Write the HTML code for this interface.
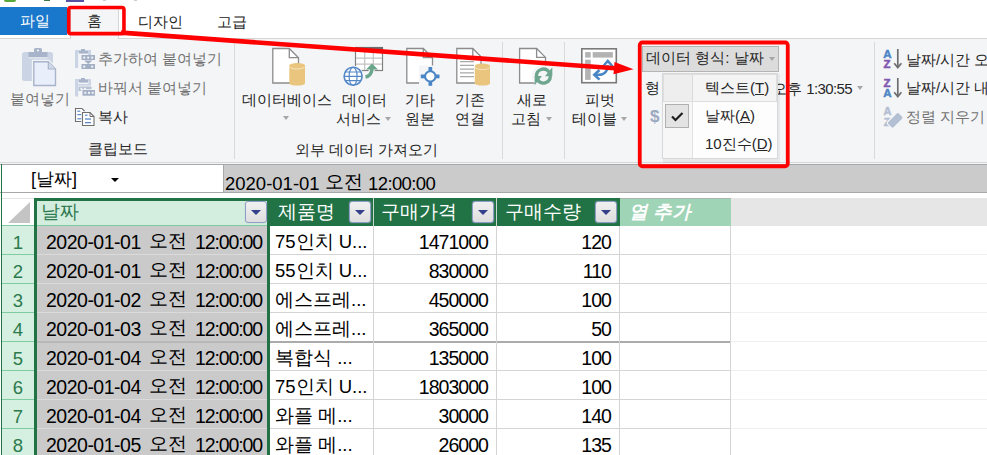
<!DOCTYPE html>
<html><head><meta charset="utf-8">
<style>
*{margin:0;padding:0;box-sizing:border-box}
html,body{width:987px;height:455px;overflow:hidden;background:#fff}
body{position:relative;font-family:"Liberation Sans",sans-serif;color:#262626}
.a{position:absolute}
.t{position:absolute;white-space:pre;line-height:1;font-size:15px}
.g{color:#727272}
.dk{color:#262626}
.arr{position:absolute;width:0;height:0;border-left:3.5px solid transparent;border-right:3.5px solid transparent;border-top:4px solid #a6a6a6}
.cell{position:absolute;white-space:pre;line-height:1;font-size:18.5px;color:#000}
.hl{position:absolute;height:1px;background:#d4d4d4}
.vl{position:absolute;width:1px;background:#d4d4d4}
.fb{position:absolute;width:22px;height:22px;border:1px solid #8f9cc6;border-radius:3px;background:linear-gradient(#f0f0f0,#dedede);box-shadow:0 0 1px #aab4d8}
.fb:after{content:"";position:absolute;left:5px;top:8px;border-left:5px solid transparent;border-right:5px solid transparent;border-top:5px solid #34408a}
</style></head><body>

<!-- top strip icons -->
<div class="a" style="left:4px;top:0;width:12px;height:1.5px;background:#5aa83c;border-radius:0 0 5px 5px"></div>
<div class="a" style="left:44px;top:0;width:6px;height:1px;background:#3b7a45"></div>
<div class="a" style="left:66px;top:0;width:18px;height:1.5px;background:#5553a6"></div>
<div class="a" style="left:103px;top:0;width:3px;height:1px;background:#c8ccd4"></div>
<div class="a" style="left:134px;top:0;width:3px;height:1px;background:#c8ccd4"></div>

<!-- tab bar -->
<div class="a" style="left:0;top:7px;width:67px;height:28px;background:#1a78cc"></div>
<div class="t" style="left:20px;top:13px;color:#fff">파일</div>
<div class="a" style="left:0;top:38px;width:987px;height:1px;background:#d5d5d5"></div>
<div class="a" style="left:70px;top:8px;width:49px;height:31px;background:#f4f5f7;border:1px solid #d5d5d5;border-bottom:none"></div>
<div class="t" style="left:87px;top:13px;color:#222">홈</div>
<div class="t" style="left:138px;top:14px;color:#222">디자인</div>
<div class="t" style="left:217px;top:14px;color:#222">고급</div>

<!-- ribbon -->
<div class="a" style="left:0;top:39px;width:987px;height:123px;background:#f4f5f7"></div>
<div class="a" style="left:0;top:162px;width:987px;height:1px;background:#d8d8d8"></div>
<div class="vl" style="left:234px;top:42px;height:117px;background:#dadada"></div>
<div class="vl" style="left:502px;top:42px;height:117px;background:#dadada"></div>
<div class="vl" style="left:564px;top:42px;height:117px;background:#dadada"></div>
<div class="vl" style="left:874px;top:42px;height:117px;background:#dadada"></div>

<div class="t g" style="left:10px;top:91px">붙여넣기</div>
<div class="t g" style="left:98px;top:51px">추가하여 붙여넣기</div>
<div class="t g" style="left:98px;top:80px">바꿔서 붙여넣기</div>
<div class="t dk" style="left:98px;top:109px">복사</div>
<div class="t dk" style="left:88px;top:141px">클립보드</div>

<div class="t dk" style="left:242px;top:92px">데이터베이스</div>
<div class="arr" style="left:283px;top:116px"></div>
<div class="t dk" style="left:342px;top:92px">데이터</div>
<div class="t dk" style="left:336px;top:111px">서비스</div>
<div class="arr" style="left:385px;top:117px"></div>
<div class="t dk" style="left:405px;top:92px">기타</div>
<div class="t dk" style="left:405px;top:111px">원본</div>
<div class="t dk" style="left:455px;top:92px">기존</div>
<div class="t dk" style="left:455px;top:111px">연결</div>
<div class="t dk" style="left:295px;top:142px">외부 데이터 가져오기</div>
<div class="t dk" style="left:517px;top:92px">새로</div>
<div class="t dk" style="left:511px;top:111px">고침</div>
<div class="arr" style="left:546px;top:117px"></div>
<div class="t dk" style="left:585px;top:92px">피벗</div>
<div class="t dk" style="left:572px;top:111px">테이블</div>
<div class="arr" style="left:621px;top:117px"></div>

<!-- data type area -->
<div class="a" style="left:642px;top:46px;width:137px;height:26px;background:#dcdcdc;border:1px solid #b4b4b4"></div>
<div class="t dk" style="left:646px;top:50px">데이터 형식: 날짜</div>
<div class="arr" style="left:769px;top:57px"></div>
<div class="t dk" style="left:645px;top:80px">형</div>
<div class="t" style="left:650px;top:108px;color:#9aa8c0;font-weight:bold;font-size:17px">$</div>
<div class="t dk" style="left:772px;top:81px">오후 <span style="letter-spacing:-0.6px">1:30:55</span></div>
<div class="arr" style="left:857px;top:86px"></div>

<!-- sort -->
<div class="t dk" style="left:906px;top:52px">날짜/시간 오름차순</div>
<div class="t dk" style="left:906px;top:80px">날짜/시간 내림차순</div>
<div class="t g" style="left:906px;top:109px">정렬 지우기</div>

<!-- dropdown menu -->
<div class="a" style="left:663px;top:74px;width:117px;height:89px;background:rgba(0,0,0,0.05)"></div>
<div class="a" style="left:662px;top:73px;width:116px;height:86px;background:#fdfdfd;border:1px solid #d8d8d8"></div>
<div class="a" style="left:663px;top:74px;width:29px;height:84px;background:#f7f7f7"></div>
<div class="vl" style="left:692px;top:74px;height:84px;background:#e2e2e2"></div>
<div class="a" style="left:663px;top:74px;width:114px;height:28px;background:rgba(0,0,0,0.035);border:1px solid #dedede"></div>
<div class="a" style="left:665px;top:104px;width:24px;height:24px;background:#e3e3e3;border:1px solid #b0b0b0"></div>
<svg class="a" style="left:665px;top:104px" width="24" height="24"><path d="M7 12.5 L10.5 16 L17.5 9" fill="none" stroke="#1e1e1e" stroke-width="2.2"/></svg>
<div class="t dk" style="left:705px;top:80px">텍스트(<u>T</u>)</div>
<div class="t dk" style="left:705px;top:108px">날짜(<u>A</u>)</div>
<div class="t dk" style="left:705px;top:136px">10진수(<u>D</u>)</div>

<!-- formula bar -->
<div class="a" style="left:0;top:163px;width:987px;height:1px;background:#f4f5f7"></div>
<div class="a" style="left:0;top:164px;width:987px;height:29px;background:#cbcbcb;border-top:1px solid #a8a8a8;border-bottom:1px solid #a8a8a8"></div>
<div class="a" style="left:0;top:165px;width:224px;height:27px;background:#fff;border-right:1px solid #a8a8a8"></div>
<div class="t" style="left:31px;top:170px;font-size:18px;color:#000">[날짜]</div>
<div class="a" style="left:111px;top:178px;width:0;height:0;border-left:4px solid transparent;border-right:4px solid transparent;border-top:4px solid #000"></div>
<div class="t" style="left:225px;top:175px;font-size:18.5px;color:#000">2020-01-01</div>
<div class="t" style="left:325px;top:172px;font-size:19px;color:#000">오전</div>
<div class="t" style="left:368px;top:175px;font-size:18.5px;color:#000;letter-spacing:-0.6px">12:00:00</div>
<div class="a" style="left:1px;top:164px;width:1px;height:291px;background:#217346"></div>

<!-- grid -->
<div class="a" style="left:2px;top:198px;width:32px;height:28px;background:#fff;border-top:1px solid #e3e3e3"></div>
<svg class="a" style="left:8px;top:202px" width="22" height="21"><path d="M22 0 L22 21 L0 21 Z" fill="#c4c4c4"/></svg>
<div class="a" style="left:2px;top:226px;width:32px;height:229px;background:#d5efe1"></div>
<div class="a" style="left:37px;top:201px;width:230px;height:25px;background:#d3eedf"></div>
<div class="a" style="left:37px;top:226px;width:230px;height:229px;background:#cacaca"></div>
<div class="a" style="left:270px;top:198px;width:350px;height:28px;background:#217346"></div>
<div class="a" style="left:373px;top:198px;width:1px;height:28px;background:#c9d9cf"></div>
<div class="a" style="left:496px;top:198px;width:1px;height:28px;background:#c9d9cf"></div>
<div class="a" style="left:620px;top:198px;width:111px;height:28px;background:#9fd4b6;border-top:1px solid #a9b5ae"></div>
<div class="a" style="left:731px;top:198px;width:256px;height:28px;background:#e6e6e6"></div>
<div class="a" style="left:34px;top:198px;width:236px;height:257px;border:3px solid #217346;border-bottom:none"></div>
<div class="a" style="left:2px;top:225px;width:32px;height:1px;background:#7fcca0"></div>
<div class="a" style="left:37px;top:225px;width:230px;height:1px;background:#7fcca0"></div>
<div class="a" style="left:2px;top:254px;width:32px;height:1px;background:#7fcca0"></div>
<div class="a" style="left:37px;top:254px;width:230px;height:1px;background:#dadada"></div>
<div class="a" style="left:270px;top:254px;width:461px;height:1px;background:#d4d4d4"></div>
<div class="a" style="left:731px;top:254px;width:256px;height:1px;background:#f0f0f0"></div>
<div class="a" style="left:2px;top:283px;width:32px;height:1px;background:#7fcca0"></div>
<div class="a" style="left:37px;top:283px;width:230px;height:1px;background:#dadada"></div>
<div class="a" style="left:270px;top:283px;width:461px;height:1px;background:#d4d4d4"></div>
<div class="a" style="left:731px;top:283px;width:256px;height:1px;background:#f0f0f0"></div>
<div class="a" style="left:2px;top:312px;width:32px;height:1px;background:#7fcca0"></div>
<div class="a" style="left:37px;top:312px;width:230px;height:1px;background:#dadada"></div>
<div class="a" style="left:270px;top:312px;width:461px;height:1px;background:#d4d4d4"></div>
<div class="a" style="left:731px;top:312px;width:256px;height:1px;background:#f0f0f0"></div>
<div class="a" style="left:2px;top:341px;width:32px;height:1px;background:#7fcca0"></div>
<div class="a" style="left:37px;top:341px;width:230px;height:2px;background:#b8b8b8"></div>
<div class="a" style="left:270px;top:341px;width:461px;height:2px;background:#ababab"></div>
<div class="a" style="left:731px;top:341px;width:256px;height:1px;background:#f0f0f0"></div>
<div class="a" style="left:2px;top:370px;width:32px;height:1px;background:#7fcca0"></div>
<div class="a" style="left:37px;top:370px;width:230px;height:1px;background:#dadada"></div>
<div class="a" style="left:270px;top:370px;width:461px;height:1px;background:#d4d4d4"></div>
<div class="a" style="left:731px;top:370px;width:256px;height:1px;background:#f0f0f0"></div>
<div class="a" style="left:2px;top:399px;width:32px;height:1px;background:#7fcca0"></div>
<div class="a" style="left:37px;top:399px;width:230px;height:1px;background:#dadada"></div>
<div class="a" style="left:270px;top:399px;width:461px;height:1px;background:#d4d4d4"></div>
<div class="a" style="left:731px;top:399px;width:256px;height:1px;background:#f0f0f0"></div>
<div class="a" style="left:2px;top:428px;width:32px;height:1px;background:#7fcca0"></div>
<div class="a" style="left:37px;top:428px;width:230px;height:1px;background:#dadada"></div>
<div class="a" style="left:270px;top:428px;width:461px;height:1px;background:#d4d4d4"></div>
<div class="a" style="left:731px;top:428px;width:256px;height:1px;background:#f0f0f0"></div>
<div class="a" style="left:373px;top:226px;width:1px;height:229px;background:#d4d4d4"></div>
<div class="a" style="left:496px;top:226px;width:1px;height:229px;background:#d4d4d4"></div>
<div class="a" style="left:619px;top:226px;width:1px;height:229px;background:#d4d4d4"></div>
<div class="a" style="left:730px;top:226px;width:1px;height:229px;background:#d4d4d4"></div>
<div class="cell" style="left:41px;top:203px;color:#2f7a50">날짜</div>
<div class="fb" style="left:245px;top:201px"></div>
<div class="cell" style="left:278px;top:203px;color:#fff">제품명</div>
<div class="fb" style="left:349px;top:201px"></div>
<div class="cell" style="left:381px;top:203px;color:#fff">구매가격</div>
<div class="fb" style="left:472px;top:201px"></div>
<div class="cell" style="left:505px;top:203px;color:#fff">구매수량</div>
<div class="fb" style="left:595px;top:201px"></div>
<div class="cell" style="left:629px;top:203px;color:#fff;font-style:italic;font-weight:bold">열 추가</div>
<div class="cell" style="left:2px;width:32px;text-align:center;top:234px;color:#2b7a4b">1</div>
<div class="cell" style="left:46px;top:233px;font-size:19.5px;letter-spacing:-0.5px">2020-01-01</div>
<div class="cell" style="left:149px;top:230.5px;font-size:19px">오전</div>
<div class="cell" style="left:195px;top:233px;font-size:19.5px;letter-spacing:-1.1px">12:00:00</div>
<div class="cell" style="left:275px;top:232.5px">75인치 U...</div>
<div class="cell" style="left:373px;width:115px;text-align:right;top:233px;font-size:19.5px;letter-spacing:-0.95px">1471000</div>
<div class="cell" style="left:496px;width:115px;text-align:right;top:233px;font-size:19.5px;letter-spacing:-0.95px">120</div>
<div class="cell" style="left:2px;width:32px;text-align:center;top:263px;color:#2b7a4b">2</div>
<div class="cell" style="left:46px;top:262px;font-size:19.5px;letter-spacing:-0.5px">2020-01-01</div>
<div class="cell" style="left:149px;top:259.5px;font-size:19px">오전</div>
<div class="cell" style="left:195px;top:262px;font-size:19.5px;letter-spacing:-1.1px">12:00:00</div>
<div class="cell" style="left:275px;top:261.5px">55인치 U...</div>
<div class="cell" style="left:373px;width:115px;text-align:right;top:262px;font-size:19.5px;letter-spacing:-0.95px">830000</div>
<div class="cell" style="left:496px;width:115px;text-align:right;top:262px;font-size:19.5px;letter-spacing:-0.95px">110</div>
<div class="cell" style="left:2px;width:32px;text-align:center;top:292px;color:#2b7a4b">3</div>
<div class="cell" style="left:46px;top:291px;font-size:19.5px;letter-spacing:-0.5px">2020-01-02</div>
<div class="cell" style="left:149px;top:288.5px;font-size:19px">오전</div>
<div class="cell" style="left:195px;top:291px;font-size:19.5px;letter-spacing:-1.1px">12:00:00</div>
<div class="cell" style="left:275px;top:290.5px">에스프레...</div>
<div class="cell" style="left:373px;width:115px;text-align:right;top:291px;font-size:19.5px;letter-spacing:-0.95px">450000</div>
<div class="cell" style="left:496px;width:115px;text-align:right;top:291px;font-size:19.5px;letter-spacing:-0.95px">100</div>
<div class="cell" style="left:2px;width:32px;text-align:center;top:321px;color:#2b7a4b">4</div>
<div class="cell" style="left:46px;top:320px;font-size:19.5px;letter-spacing:-0.5px">2020-01-03</div>
<div class="cell" style="left:149px;top:317.5px;font-size:19px">오전</div>
<div class="cell" style="left:195px;top:320px;font-size:19.5px;letter-spacing:-1.1px">12:00:00</div>
<div class="cell" style="left:275px;top:319.5px">에스프레...</div>
<div class="cell" style="left:373px;width:115px;text-align:right;top:320px;font-size:19.5px;letter-spacing:-0.95px">365000</div>
<div class="cell" style="left:496px;width:115px;text-align:right;top:320px;font-size:19.5px;letter-spacing:-0.95px">50</div>
<div class="cell" style="left:2px;width:32px;text-align:center;top:350px;color:#2b7a4b">5</div>
<div class="cell" style="left:46px;top:349px;font-size:19.5px;letter-spacing:-0.5px">2020-01-04</div>
<div class="cell" style="left:149px;top:346.5px;font-size:19px">오전</div>
<div class="cell" style="left:195px;top:349px;font-size:19.5px;letter-spacing:-1.1px">12:00:00</div>
<div class="cell" style="left:275px;top:348.5px">복합식 ...</div>
<div class="cell" style="left:373px;width:115px;text-align:right;top:349px;font-size:19.5px;letter-spacing:-0.95px">135000</div>
<div class="cell" style="left:496px;width:115px;text-align:right;top:349px;font-size:19.5px;letter-spacing:-0.95px">100</div>
<div class="cell" style="left:2px;width:32px;text-align:center;top:379px;color:#2b7a4b">6</div>
<div class="cell" style="left:46px;top:378px;font-size:19.5px;letter-spacing:-0.5px">2020-01-04</div>
<div class="cell" style="left:149px;top:375.5px;font-size:19px">오전</div>
<div class="cell" style="left:195px;top:378px;font-size:19.5px;letter-spacing:-1.1px">12:00:00</div>
<div class="cell" style="left:275px;top:377.5px">75인치 U...</div>
<div class="cell" style="left:373px;width:115px;text-align:right;top:378px;font-size:19.5px;letter-spacing:-0.95px">1803000</div>
<div class="cell" style="left:496px;width:115px;text-align:right;top:378px;font-size:19.5px;letter-spacing:-0.95px">100</div>
<div class="cell" style="left:2px;width:32px;text-align:center;top:408px;color:#2b7a4b">7</div>
<div class="cell" style="left:46px;top:407px;font-size:19.5px;letter-spacing:-0.5px">2020-01-04</div>
<div class="cell" style="left:149px;top:404.5px;font-size:19px">오전</div>
<div class="cell" style="left:195px;top:407px;font-size:19.5px;letter-spacing:-1.1px">12:00:00</div>
<div class="cell" style="left:275px;top:406.5px">와플 메...</div>
<div class="cell" style="left:373px;width:115px;text-align:right;top:407px;font-size:19.5px;letter-spacing:-0.95px">30000</div>
<div class="cell" style="left:496px;width:115px;text-align:right;top:407px;font-size:19.5px;letter-spacing:-0.95px">140</div>
<div class="cell" style="left:2px;width:32px;text-align:center;top:437px;color:#2b7a4b">8</div>
<div class="cell" style="left:46px;top:436px;font-size:19.5px;letter-spacing:-0.5px">2020-01-05</div>
<div class="cell" style="left:149px;top:433.5px;font-size:19px">오전</div>
<div class="cell" style="left:195px;top:436px;font-size:19.5px;letter-spacing:-1.1px">12:00:00</div>
<div class="cell" style="left:275px;top:435.5px">와플 메...</div>
<div class="cell" style="left:373px;width:115px;text-align:right;top:436px;font-size:19.5px;letter-spacing:-0.95px">26000</div>
<div class="cell" style="left:496px;width:115px;text-align:right;top:436px;font-size:19.5px;letter-spacing:-0.95px">135</div>



<!-- icons -->
<svg class="a" style="left:0;top:0" width="987" height="165">
<g id="paste">
 <rect x="22" y="52" width="31" height="29" rx="2.5" fill="#cad4e4"/>
 <rect x="28.5" y="52" width="19" height="5.2" fill="#a8b4c9"/>
 <rect x="28.5" y="57.2" width="19" height="1.3" fill="#e4e9f1"/>
 <rect x="34" y="48" width="8" height="5" rx="1.5" fill="#a8b4c9"/>
 <circle cx="38" cy="50.5" r="1.1" fill="#f4f5f7"/>
 <path d="M33.3 61.3 H48.5 L56 68.8 V86 H33.3 Z" fill="none" stroke="#f4f5f7" stroke-width="3"/>
 <path d="M33.8 61.8 H48.3 L55.5 69 V85.5 H33.8 Z" fill="#e9effa" stroke="#a8b4c9" stroke-width="1.4"/>
 <path d="M48.3 61.8 V69 H55.5" fill="#d0d9e8" stroke="#a8b4c9" stroke-width="1.2"/>
</g>
<g id="pasteappend">
 <rect x="75" y="50" width="3.2" height="18" fill="#cad4e4"/>
 <rect x="75" y="50" width="16" height="2.5" fill="#cad4e4"/>
 <rect x="88" y="50" width="3" height="5" fill="#cad4e4"/>
 <rect x="79" y="51" width="9" height="2.6" fill="#a8b4c9"/>
 <rect x="81" y="49" width="4" height="2.2" fill="#a8b4c9"/>
 <rect x="81.5" y="55" width="13.5" height="5" fill="#a3afc5"/>
 <rect x="83.2" y="56.6" width="2" height="2" fill="#f0f3f8"/><rect x="87.2" y="56.6" width="2" height="2" fill="#f0f3f8"/><rect x="91.2" y="56.6" width="2" height="2" fill="#f0f3f8"/>
 <path d="M84 60.5 H92.5 L88.25 64 Z" fill="#a3afc5"/>
 <rect x="81.5" y="64" width="13.5" height="5" fill="#a3afc5"/>
 <rect x="83.2" y="65.6" width="2" height="2" fill="#f0f3f8"/><rect x="91.2" y="65.6" width="2" height="2" fill="#f0f3f8"/>
</g>
<g id="pastereplace">
 <rect x="75" y="79" width="3.2" height="17.5" fill="#cad4e4"/>
 <rect x="75" y="79" width="16" height="2.5" fill="#cad4e4"/>
 <rect x="88.5" y="79" width="2.5" height="6" fill="#cad4e4"/>
 <rect x="79" y="79.7" width="9" height="2.9" fill="#a8b4c9"/>
 <rect x="81" y="78" width="4" height="2" fill="#a8b4c9"/>
 <rect x="78" y="84" width="13" height="1.6" fill="#cad4e4"/>
 <rect x="78.5" y="86.5" width="13" height="4.5" fill="#b6c1d4"/>
 <rect x="80.3" y="87.8" width="2" height="2" fill="#f0f3f8"/><rect x="84" y="87.8" width="2" height="2" fill="#f0f3f8"/>
 <rect x="81.5" y="89.2" width="14.5" height="7.5" fill="#f4f5f7"/>
 <rect x="82.5" y="90" width="12.5" height="5.7" fill="#a3afc5"/>
 <rect x="84.3" y="91.8" width="2" height="2" fill="#f0f3f8"/><rect x="88" y="91.8" width="2" height="2" fill="#f0f3f8"/><rect x="91.7" y="91.8" width="2" height="2" fill="#f0f3f8"/>
</g>
<g id="copy">
 <path d="M75.5 108.5 H82 L84.5 111 V121.5 H75.5 Z" fill="#fff" stroke="#707070" stroke-width="1.1"/>
 <rect x="77.3" y="110.6" width="3" height="1.2" fill="#5b8bc6"/>
 <rect x="77.3" y="114" width="4.5" height="1.2" fill="#5b8bc6"/>
 <rect x="77.3" y="118.2" width="4.5" height="1.2" fill="#5b8bc6"/>
 <path d="M82.5 112.5 H90 L94 116.5 V125.5 H82.5 Z" fill="none" stroke="#f4f5f7" stroke-width="2.5"/>
 <path d="M82.5 112.5 H90 L94 116.5 V125.5 H82.5 Z" fill="#fff" stroke="#707070" stroke-width="1.1"/>
 <path d="M90 112.5 V116.5 H94" fill="none" stroke="#707070" stroke-width="1"/>
 <rect x="85" y="114.6" width="2.5" height="1.2" fill="#5b8bc6"/>
 <rect x="85" y="118.4" width="6" height="1.3" fill="#5b8bc6"/>
 <rect x="85" y="122" width="6" height="1.3" fill="#5b8bc6"/>
</g>
<g id="db" stroke-width="1.3">
 <path d="M272.8 48.5 H289.3 L298.5 57.7 V83 H272.8 Z" fill="#fff" stroke="#8c8c8c"/>
 <path d="M289.3 48.5 V57.7 H298.5" fill="none" stroke="#8c8c8c"/>
 <path d="M289.3 65.5 A7.85 2.6 0 0 1 305 65.5 V83.2 A7.85 2.4 0 0 1 289.3 83.2 Z" fill="#e9c57d"/>
 <path d="M289.8 66.8 A7.3 2.2 0 0 0 304.5 66.8" fill="none" stroke="#f6e6c2" stroke-width="1"/>
</g>
<g id="dataservice">
 <rect x="355.5" y="47.5" width="27" height="23" fill="#fff" stroke="#808080" stroke-width="1.2"/>
 <rect x="355" y="47" width="28" height="3" fill="#6c6c6c"/>
 <path d="M356 58.1 H382 M356 64.2 H382 M364.7 50 V70 M373.3 50 V70" stroke="#c2c2c2" stroke-width="1.2"/>
 <circle cx="353.1" cy="76.3" r="10.6" fill="#f4f5f7"/>
 <circle cx="353.1" cy="76.3" r="9" fill="#fff" stroke="#5488c6" stroke-width="1.6"/>
 <path d="M344.3 76.3 H362 M345.5 72 H360.7 M345.5 80.6 H360.7" stroke="#5488c6" stroke-width="1.2"/>
 <ellipse cx="353.1" cy="76.3" rx="4" ry="9" fill="none" stroke="#5488c6" stroke-width="1.2"/>
 <path d="M365.5 77 C369 76.5 372 73.5 372 68" fill="none" stroke="#f4f5f7" stroke-width="6"/>
 <path d="M365.5 77 C369 76.5 372 73.5 372 68" fill="none" stroke="#6aa68c" stroke-width="3.6"/>
 <path d="M366 69.5 L372 63.5 L378 69.5 Z" fill="#6aa68c"/>
</g>
<g id="other">
 <path d="M406.8 48.5 H423.3 L432.5 57.7 V83 H406.8 Z" fill="#fff" stroke="#8c8c8c" stroke-width="1.3"/>
 <path d="M423.3 48.5 V57.7 H432.5" fill="none" stroke="#8c8c8c" stroke-width="1.3"/>
 <rect x="419" y="65.5" width="22.5" height="22" fill="#f4f5f7"/>
 <path d="M419.5 66 V72.5 H426 V66 Z" fill="#f4f5f7"/>
 <rect x="428.5" y="67" width="3.7" height="4.5" fill="#4a86c6"/>
 <rect x="428.5" y="81.3" width="3.7" height="4.5" fill="#4a86c6"/>
 <rect x="420.8" y="74.5" width="4.5" height="3.8" fill="#4a86c6"/>
 <rect x="435" y="74.5" width="4.5" height="3.8" fill="#4a86c6"/>
 <circle cx="430.3" cy="76.4" r="5.2" fill="#fff" stroke="#4a86c6" stroke-width="2"/>
</g>
<g id="existing">
 <path d="M456.8 48.5 H472.8 L481 56.7 V83 H456.8 Z" fill="#fff" stroke="#8c8c8c" stroke-width="1.3"/>
 <path d="M472.8 48.5 V56.7 H481" fill="none" stroke="#8c8c8c" stroke-width="1.3"/>
 <path d="M460 61.7 H474 M460 65.4 H474 M460 69.1 H474 M460 72.8 H474 M460 76.6 H474" stroke="#a9a9a9" stroke-width="1.2"/>
 <path d="M474.8 66 A7.6 2.6 0 0 1 490 66 V83.2 A7.6 2.4 0 0 1 474.8 83.2 Z" fill="#e9c57d"/>
 <path d="M475.3 67.3 A7.1 2.2 0 0 0 489.5 67.3" fill="none" stroke="#f6e6c2" stroke-width="1"/>
</g>
<g id="refresh">
 <path d="M519.6 48.5 H536.6 L545.5 57.4 V83 H519.6 Z" fill="#fff" stroke="#8c8c8c" stroke-width="1.3"/>
 <path d="M536.6 48.5 V57.4 H545.5" fill="none" stroke="#8c8c8c" stroke-width="1.3"/>
 <circle cx="542.9" cy="76" r="11" fill="#f4f5f7"/>
 <path d="M536.5 76.6 A6.9 6.9 0 0 1 549.05 72.1" fill="none" stroke="#6fa68f" stroke-width="3.3"/>
 <path d="M550.3 75.8 A6.9 6.9 0 0 1 537.75 80.06" fill="none" stroke="#6fa68f" stroke-width="3.3"/>
 <path d="M545 76.3 L552.3 76.3 L552.3 67.3 Z" fill="#6fa68f"/>
 <path d="M542 76 L534.6 76 L534.6 85.3 Z" fill="#6fa68f"/>
</g>
<g id="pivot">
 <rect x="581.8" y="48.8" width="34.5" height="33.9" fill="#fff" stroke="#7a7a7a" stroke-width="1.6"/>
 <rect x="585.1" y="52.1" width="5.6" height="5.5" fill="#b3b3b3"/>
 <rect x="592.7" y="52.1" width="20.2" height="5.5" fill="#b3b3b3"/>
 <rect x="585.1" y="59.7" width="5.6" height="20.2" fill="#b3b3b3"/>
 <path d="M596 74.8 H599 C604.5 74.8 607.8 71 607.8 65" fill="none" stroke="#4a86c6" stroke-width="2.6"/>
 <path d="M603 66.5 L607.8 61 L612.6 66.5" fill="none" stroke="#4a86c6" stroke-width="2.6"/>
 <path d="M599.5 70 L594.3 74.8 L599.5 79.6" fill="none" stroke="#4a86c6" stroke-width="2.6"/>
</g>
<g id="sortaz" font-family="Liberation Sans" font-weight="bold" stroke-width="0.4">
 <text x="883.3" y="57.6" font-size="11.5" fill="#4f86c6" stroke="#4f86c6" stroke-width="0.5">A</text>
 <text x="883.6" y="68" font-size="11.5" fill="#8058b0" stroke="#8058b0" stroke-width="0.5">Z</text>
 <path d="M897.8 49 V67" stroke="#6f6f6f" stroke-width="1.7"/>
 <path d="M894.2 63.3 L897.8 67.6 L901.4 63.3" fill="none" stroke="#6f6f6f" stroke-width="1.7"/>
</g>
<g id="sortza" font-family="Liberation Sans" font-weight="bold" stroke-width="0.4">
 <text x="883.6" y="87" font-size="11.5" fill="#8058b0" stroke="#8058b0" stroke-width="0.5">Z</text>
 <text x="883.3" y="97" font-size="11.5" fill="#4f86c6" stroke="#4f86c6" stroke-width="0.5">A</text>
 <path d="M897.8 78 V96" stroke="#6f6f6f" stroke-width="1.7"/>
 <path d="M894.2 92.3 L897.8 96.6 L901.4 92.3" fill="none" stroke="#6f6f6f" stroke-width="1.7"/>
</g>
<g id="clearsort" font-family="Liberation Sans" font-weight="bold" fill="#b3bfd3" stroke="#b3bfd3" stroke-width="0.5">
 <text x="883.6" y="114.6" font-size="11">A</text>
 <text x="883.8" y="125.7" font-size="11">Z</text>
 <rect x="887.2" y="116" width="16" height="8.6" rx="2" transform="rotate(-45 895.2 120.3)" fill="#b3bfd3" stroke="#f4f5f7" stroke-width="1.2"/>
</g>
</svg>
<!-- annotations -->
<svg class="a" style="left:0;top:0" width="987" height="455">
<rect x="68.75" y="7.45" width="55.2" height="26.2" rx="2" fill="none" stroke="#ff0000" stroke-width="3.6"/>
<rect x="639.75" y="42.5" width="148" height="123.75" rx="2.5" fill="none" stroke="#ff0000" stroke-width="3.8"/>
<path d="M121 32.6 L615 68.2" stroke="#ff0000" stroke-width="4.6" fill="none"/>
<path d="M614.5 62 L613.5 74.2 L633.5 69.2 Z" fill="#ff0000"/>
</svg>
</body></html>
